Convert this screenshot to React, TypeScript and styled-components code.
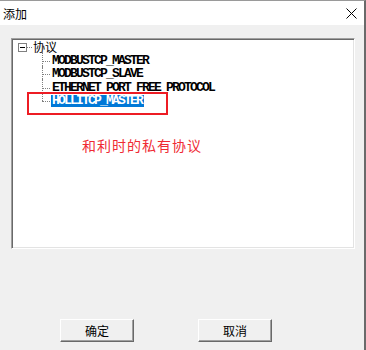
import React from 'react';
import styled, { createGlobalStyle } from 'styled-components';

const GlobalStyle = createGlobalStyle`
    html, body {
        margin: 0;
        padding: 0;
        background: #f0f0f0;
        overflow: hidden;
    }
`

const cjk = `"Noto Sans CJK SC", "Noto Sans", sans-serif`
const dotted = "#808080"

const Window = styled.div`
    width: 366px;
    height: 350px;
    box-sizing: border-box;
    background: #f0f0f0;
    border-top: 1px solid #9a9a9a;
    border-right: 2px solid #6a6a6a;
    display: flex;
    flex-direction: column;
    font-family: ${cjk};
`

const TitleBar = styled.div`
    height: 24px;
    background: #ffffff;
    display: flex;
    align-items: center;
    justify-content: space-between;
    padding: 0 7px 0 3px;
`

const Title = styled.span`
    font-size: 12px;
    color: #000;
    line-height: 12px;
    margin-top: 1px;
`

const Body = styled.div`
    padding: 13px 9px 0 11px;
    display: flex;
    flex-direction: column;
`

const TreePanel = styled.div`
    position: relative;
    width: 344px;
    height: 211px;
    box-sizing: border-box;
    background: #ffffff;
    border: 1px solid;
    border-color: #a0a0a0 #ffffff #ffffff #a0a0a0;
    box-shadow: inset 1px 1px 0 #696969, inset -1px -1px 0 #e3e3e3;
    padding: 1px 0 0 6px;
`

const RootRow = styled.div`
    height: 14px;
    display: flex;
    align-items: center;
`

const ExpandBox = styled.span`
    position: relative;
    width: 9px;
    height: 9px;
    box-sizing: border-box;
    border: 1px solid #808080;
    background: #fff;
    &::after {
        content: '';
        position: absolute;
        left: 1px;
        top: 3px;
        width: 5px;
        height: 1px;
        background: #000;
    }
`

const Connector = styled.span`
    width: 5px;
    border-top: 1px dotted ${dotted};
`

const RootLabel = styled.span`
    margin-left: 1px;
    font-size: 12px;
    line-height: 14px;
    color: #000;
`

const Children = styled.div`
    margin-left: 24px;
`

const ChildRow = styled.div<{ $last?: boolean }>`
    position: relative;
    height: 13.5px;
    padding-left: 9px;
    display: flex;
    align-items: center;
    &::before {
        content: '';
        position: absolute;
        left: 0;
        top: 50%;
        width: 8px;
        border-top: 1px dotted ${dotted};
    }
    &::after {
        content: '';
        position: absolute;
        left: 0;
        top: -2px;
        height: ${p => (p.$last ? 'calc(50% + 2px)' : 'calc(100% + 2px)')};
        border-left: 1px dotted ${dotted};
    }
`

const ItemLabel = styled.span<{ $selected?: boolean }>`
    display: inline-block;
    padding: 0 2px 0 1px;
    height: 12px;
    line-height: 11px;
    font-family: "Liberation Mono", "DejaVu Sans Mono", monospace;
    font-size: 13px;
    font-weight: bold;
    letter-spacing: -1.8px;
    color: ${p => (p.$selected ? '#ffffff' : '#000000')};
    background: ${p => (p.$selected ? '#0078d7' : 'transparent')};
`

const Highlight = styled.div`
    position: absolute;
    left: 15px;
    top: 53px;
    width: 141px;
    height: 23px;
    box-sizing: border-box;
    border: 2px solid #ed1c24;
`

const Note = styled.div`
    position: absolute;
    left: 70px;
    top: 99px;
    font-family: ${cjk};
    font-size: 14px;
    line-height: 14px;
    letter-spacing: 1px;
    color: #ef2b34;
`

const ButtonRow = styled.div`
    margin-top: 70px;
    padding-left: 49px;
    display: flex;
    gap: 64px;
`

const Button = styled.button`
    width: 74px;
    height: 23px;
    box-sizing: border-box;
    padding: 0;
    background: #f0f0f0;
    border: 1px solid;
    border-color: #ffffff #696969 #696969 #ffffff;
    box-shadow: inset -1px -1px 0 #a0a0a0;
    font-family: ${cjk};
    font-size: 12px;
    color: #000;
    border-radius: 0;
`

const CloseIcon = () => (
    <svg width="11" height="11" viewBox="0 0 11 11">
        <path d="M0.5 0.5 L10.5 10.5 M10.5 0.5 L0.5 10.5" stroke="#000" strokeWidth="1" fill="none" />
    </svg>
)

const items = ["MODBUSTCP_MASTER", "MODBUSTCP_SLAVE", "ETHERNET_PORT_FREE_PROTOCOL", "HOLLITCP_MASTER"]

export default function App() {
    return (
        <>
            <GlobalStyle />
            <Window>
                <TitleBar>
                    <Title>添加</Title>
                    <CloseIcon />
                </TitleBar>
                <Body>
                    <TreePanel>
                        <RootRow>
                            <ExpandBox />
                            <Connector />
                            <RootLabel>协议</RootLabel>
                        </RootRow>
                        <Children>
                            {items.map((name, i) => (
                                <ChildRow key={name} $last={i === items.length - 1}>
                                    <ItemLabel $selected={i === items.length - 1}>{name}</ItemLabel>
                                </ChildRow>
                            ))}
                        </Children>
                        <Highlight />
                        <Note>和利时的私有协议</Note>
                    </TreePanel>
                    <ButtonRow>
                        <Button>确定</Button>
                        <Button>取消</Button>
                    </ButtonRow>
                </Body>
            </Window>
        </>
    )
}
